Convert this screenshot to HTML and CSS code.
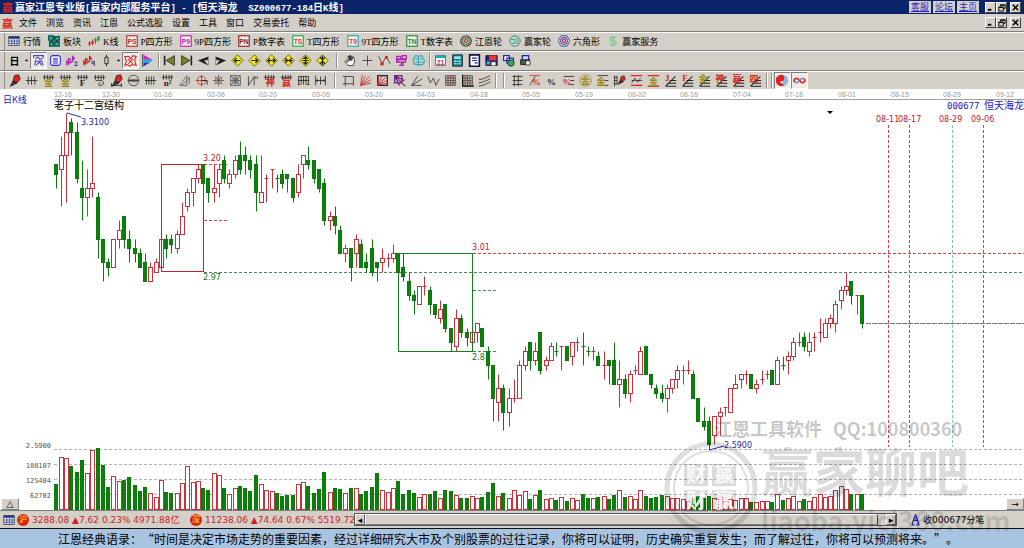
FILE: index.html
```html
<!DOCTYPE html>
<html lang="zh-CN">
<head>
  <meta charset="UTF-8">
  <meta name="viewport" content="width=device-width, initial-scale=1.0">
  <title>赢家江恩专业版</title>
  <link rel="stylesheet" href="styles.css">
</head>
<body>
<svg class="defs" aria-hidden="true">
  <symbol id="min" viewBox="0 0 10 10"><path d="M2 7.5h4" stroke="#000" stroke-width="2"/></symbol>
  <symbol id="restore" viewBox="0 0 10 10"><path d="M4 4V2h5v4H7M4 2.5h5M2 4.5h5V9H2zM2 5h5" fill="none" stroke="#000"/></symbol>
  <symbol id="close" viewBox="0 0 10 10"><path d="M2 2l6 6M8 2L2 8" stroke="#000" stroke-width="1.6"/></symbol>
  <symbol id="diamond" viewBox="0 0 16 16"><path d="M8 1l7 7-7 7-7-7z" fill="#f2ea1c" stroke="#5a5500"/></symbol>
  <symbol id="comb" viewBox="0 0 16 16"><path d="M1 4h14M3 1v6M6.500 1v6M10 1v6M13 1v6" stroke="#222" fill="none"/></symbol>
  <symbol id="fan" viewBox="0 0 16 16"><path d="M2 15L14 3M2 15h13M4 11.500h11M7 8h8" stroke="#222" fill="none" stroke-width="1.300"/></symbol>
  <symbol id="pen" viewBox="0 0 16 16"><path d="M8 2l5-1 2 5-4 5-5-2z" fill="#d22" stroke="#222"/><path d="M6 9l5 2-8 4z" fill="#444" stroke="#111"/></symbol>
  <symbol id="grid" viewBox="0 0 16 16"><path d="M2 2h12v12H2zM2 5h12M2 8h12M2 11h12M5 2v12M8 2v12M11 2v12" fill="none" stroke="#444"/></symbol>
  <symbol id="rays" viewBox="0 0 16 16"><path d="M2 14L4 1M2 14L8 2M2 14L13 3M2 14L15 7M2 14L15 11" fill="none"/></symbol>
  <symbol id="table" viewBox="0 0 16 16"><path d="M1 2h14v12H1z" fill="#fff" stroke="#234"/><path d="M1 2h14v3H1z" fill="#238"/><path d="M1 8h14M1 11h14M5 5v9M8.500 5v9M12 5v9" stroke="#238"/></symbol>
</svg>

<div class="app">
  <header class="title-bar">
    <span class="logo">赢</span>
    <h1>赢家江恩专业版<span class="mono">[</span>赢家内部服务平台<span class="mono">] - [</span>恒天海龙<span class="mono">&nbsp; SZ000677-184</span>日<span class="mono">K</span>线<span class="mono">]</span></h1>
    <nav class="quick-links">
      <a href="#">客服</a>
      <a href="#">论坛</a>
      <a href="#">主页</a>
    </nav>
    <div class="win-buttons">
      <button aria-label="最小化"><svg><use href="#min"/></svg></button>
      <button aria-label="还原"><svg><use href="#restore"/></svg></button>
      <button class="x" aria-label="关闭"><svg><use href="#close"/></svg></button>
    </div>
  </header>

  <div class="menu-bar">
    <span class="logo">赢</span>
    <nav class="menu">
      <a href="#">文件</a><a href="#">浏览</a><a href="#">资讯</a><a href="#">江恩</a><a href="#">公式选股</a><a href="#">设置</a><a href="#">工具</a><a href="#">窗口</a><a href="#">交易委托</a><a href="#">帮助</a>
    </nav>
    <div class="win-buttons">
      <button aria-label="最小化窗口"><svg><use href="#min"/></svg></button>
      <button aria-label="还原窗口"><svg><use href="#restore"/></svg></button>
      <button class="x" aria-label="关闭窗口"><svg><use href="#close"/></svg></button>
    </div>
  </div>

  <div class="toolbar views">
    <button><svg><use href="#table"/></svg>行情</button>
    <button><svg viewBox="0 0 16 16"><path d="M1 1h6v6H1zM9 2h6v5H9zM2 9h5v6H2zM9 9h6v6H9z" fill="#2aa" stroke="#043" stroke-width="1.500"/><path d="M7 4h3M12 7v3M5 7v3" stroke="#000"/></svg>板块</button>
    <button><svg viewBox="0 0 16 16"><path d="M2 8v7M6 6v8M10 4v8M14 1v8" stroke="#c22"/><path d="M2 10v3M6 8v4" stroke="#d22" stroke-width="3"/><path d="M10 5v4M14 2v5" stroke="#194" stroke-width="3"/></svg>K线</button>
    <button><svg class="tag tag-p" viewBox="0 0 16 16"><rect x="1" y="1" width="14" height="14"/><text x="8" y="12">PS</text></svg>P四方形</button>
    <button><svg class="tag tag-m" viewBox="0 0 16 16"><rect x="1" y="1" width="14" height="14"/><text x="8" y="12">P9</text></svg>9P四方形</button>
    <button><svg class="tag tag-r" viewBox="0 0 16 16"><rect x="1" y="1" width="14" height="14"/><text x="8" y="12">PN</text></svg>P数字表</button>
    <button><svg class="tag tag-g" viewBox="0 0 16 16"><rect x="1" y="1" width="14" height="14"/><text x="8" y="12">TS</text></svg>T四方形</button>
    <button><svg class="tag tag-c" viewBox="0 0 16 16"><rect x="1" y="1" width="14" height="14"/><text x="8" y="12">T9</text></svg>9T四方形</button>
    <button><svg class="tag tag-n" viewBox="0 0 16 16"><rect x="1" y="1" width="14" height="14"/><text x="8" y="12">TN</text></svg>T数字表</button>
    <button><svg viewBox="0 0 16 16" fill="none"><circle cx="8" cy="8" r="7" stroke="#522" stroke-width="1.500"/><circle cx="8" cy="8" r="4.500" stroke="#284" stroke-width="1.500"/><circle cx="8" cy="8" r="2" stroke="#c22" stroke-width="1.500"/></svg>江恩轮</button>
    <button><svg viewBox="0 0 16 16" fill="none"><circle cx="8" cy="8" r="7" stroke="#388" stroke-width="1.200"/><path d="M3 6h5v5H4M9 4l3 2v5H9" stroke="#2a7" stroke-width="1.300"/></svg>赢家轮</button>
    <button><svg viewBox="0 0 16 16" fill="none"><path d="M4 1h8l4 7-4 7H4L0 8z" stroke="#338" /><circle cx="8" cy="8" r="4.500" stroke="#55c" stroke-width="1.500"/><circle cx="8" cy="8" r="2" stroke="#c22" stroke-width="1.500"/></svg>六角形</button>
    <button><svg viewBox="0 0 16 16"><path d="M12 4Q8 1 5 4t3 4 3 4-7 0M8 1v14" fill="none" stroke="#8c9" stroke-width="2.500"/></svg>赢家服务</button>
  </div>

  <div class="toolbar icons">
    <button aria-label="日线" class="txt">日</button>
    <button aria-label="周期" class="narrow"><svg viewBox="0 0 16 16"><path d="M4 6h8l-4 5z"/></svg></button>
    <button aria-label="图形" class="on"><svg viewBox="0 0 16 16" fill="none" stroke="#44c" stroke-width="1.300"><path d="M2 5V2h12v3M4 6l3-2 3 3 3-2M3 9h10M5 8l-2 6M11 8l3 6M5 14l4-4 3 4"/></svg></button>
    <button aria-label="资料"><svg viewBox="0 0 16 16" fill="#eef" stroke="#33c" stroke-width="1.300"><path d="M4 2h8l2 2v8l-2 2H4l-2-2V4z"/><path d="M5 6h6M5 8.500h6M5 11h6"/></svg></button>
    <button aria-label="波段三"><svg viewBox="0 0 16 16" fill="none"><path d="M1 14V9l2 3V6h2v5l3-2V2l2 5V4" stroke="#a2a" stroke-width="1.500"/><path d="M10 10h4l-2 2 2 2h-4" stroke="#226"/></svg></button>
    <button aria-label="波段九"><svg viewBox="0 0 16 16" fill="none"><path d="M1 14V9l2 3V6h2v5l3-2V2l2 5V4" stroke="#c22" stroke-width="1.500"/><path d="M14 12h-3v-3h3v6" stroke="#226"/></svg></button>
    <button aria-label="蜡烛"><svg viewBox="0 0 16 16"><path d="M8 1v14" stroke="#111"/><path d="M6 4h4v8H6z" fill="#d4d0c8" stroke="#111"/></svg></button>
    <button aria-label="样式" class="narrow"><svg viewBox="0 0 16 16"><path d="M4 6h8l-4 5z"/></svg></button>
    <button aria-label="星形" class="on"><svg viewBox="0 0 16 16" fill="none" stroke="#d22" stroke-width="1.300"><path d="M1 3h5l2 3 3-4 4 1-2 5 2 6-5-1-3 2-3-2-3 1 2-5zM5 6l6 6M11 6l-6 6"/></svg></button>
    <button aria-label="筹码"><svg viewBox="0 0 16 16"><path d="M2 0v16" stroke="#333"/><path d="M3 1l11 6H3z" fill="#c2c"/><path d="M3 7h12l-5 4H3z" fill="#2ac"/><path d="M3 11h7l-7 4z" fill="#22c"/></svg></button>
    <i class="sep"></i>
    <button aria-label="首个"><svg viewBox="0 0 16 16"><path d="M2 2v12" stroke="#222" stroke-width="2"/><path d="M14 2v12L4 8z" fill="#7a8520" stroke="#222"/></svg></button>
    <button aria-label="末个"><svg viewBox="0 0 16 16"><path d="M14 2v12" stroke="#222" stroke-width="2"/><path d="M2 2v12l10-6z" fill="#7a8520" stroke="#222"/></svg></button>
    <button aria-label="前一"><svg viewBox="0 0 16 16"><path d="M1 8l13-5v4L9 8l5 6z" fill="#222"/><path d="M14 3v11" stroke="#888"/></svg></button>
    <button aria-label="后一"><svg viewBox="0 0 16 16"><path d="M15 8L2 3v4l5 1-5 6z" fill="#222"/><path d="M2 3v11" stroke="#888"/></svg></button>
    <button aria-label="左移"><svg viewBox="0 0 16 16"><use href="#diamond"/><path d="M4 8h8M7 5L4 8l3 3" fill="none" stroke="#222" stroke-width="1.500"/></svg></button>
    <button aria-label="右移"><svg viewBox="0 0 16 16"><use href="#diamond"/><path d="M4 8h8M9 5l3 3-3 3" fill="none" stroke="#222" stroke-width="1.500"/></svg></button>
    <button aria-label="横向拉伸"><svg viewBox="0 0 16 16"><use href="#diamond"/><path d="M3 8h10M6 5.500L3.500 8 6 10.500M10 5.500L12.500 8 10 10.500" fill="none" stroke="#222" stroke-width="1.500"/></svg></button>
    <button aria-label="横向压缩"><svg viewBox="0 0 16 16"><use href="#diamond"/><path d="M3 8h10M4 5l3 3-3 3M12 5L9 8l3 3" fill="none" stroke="#222" stroke-width="1.500"/></svg></button>
    <button aria-label="纵向拉伸"><svg viewBox="0 0 16 16"><use href="#diamond"/><path d="M8 3v10M5.500 6L8 3.500 10.500 6M5.500 10L8 12.500 10.500 10M4 8h8" fill="none" stroke="#222" stroke-width="1.500"/></svg></button>
    <button aria-label="纵向压缩"><svg viewBox="0 0 16 16"><use href="#diamond"/><path d="M8 2v12M5 4l3 3 3-3M5 12l3-3 3 3" fill="none" stroke="#222" stroke-width="1.500"/></svg></button>
    <i class="sep wide"></i>
    <button aria-label="拖动"><svg viewBox="0 0 16 16" fill="#fff" stroke="#222"><path d="M5 14L1 9l1-1 3 2V3h1.500v5V2H8v6V2.500h1.500V8l1-4.500H12l1 6-2 5z"/></svg></button>
    <button aria-label="十字"><svg viewBox="0 0 16 16"><path d="M8 2v12M2 8h12" stroke="#333"/></svg></button>
    <button aria-label="波形"><svg viewBox="0 0 16 16" fill="none"><path d="M1 3l4 9 5-9 5 9" stroke="#333"/><path d="M3 10h4v4H3zM9 2h3v4H9z" fill="#d22"/></svg></button>
    <button aria-label="紫色标记"><svg viewBox="0 0 16 16" fill="none" stroke="#a2a" stroke-width="1.500"><path d="M2 3h5v3H2zM9 2h5v4H9zM4 7h9v3H4zM8 10v4M5 14h5V9M2 6v4h3"/></svg></button>
    <button aria-label="云图"><svg viewBox="0 0 16 16" fill="none" stroke="#3ab" stroke-width="1.500"><path d="M8 3q-5-3-5 2-3 2-1 4-1 4 4 4l2 1V3q5-3 5 2 3 2 2 5-1 4-4 3l-3 1M4 6h3M4 10h3M10 6h2M10 10h3"/></svg></button>
    <i class="sep"></i>
    <button aria-label="日历"><svg viewBox="0 0 16 16"><path d="M2 2h12v12H2z" fill="#fff" stroke="#357"/><path d="M2 2h12v3H2z" fill="#2aa"/><text class="cal" x="8" y="13">21</text></svg></button>
    <button aria-label="计算器"><svg viewBox="0 0 16 16"><path d="M2 1h12v14H2z" fill="#189" stroke="#112"/><path d="M4 3h8v3H4z" fill="#9ee"/><path d="M4 9h8M4 12h8" stroke="#fff" stroke-width="1.500" stroke-dasharray="2 1"/></svg></button>
    <button aria-label="记事"><svg viewBox="0 0 16 16"><path d="M2 1h12v14H2z" fill="#fff" stroke="#114" stroke-width="2"/><path d="M5 5h6M5 8h6M8 11h4" stroke="#22a" stroke-width="1.500"/></svg></button>
    <button aria-label="保存"><svg viewBox="0 0 16 16"><path d="M1 2h14v12H1z" fill="#228" stroke="#111"/><path d="M5 2h9v6H5z" fill="#e33"/><path d="M2 9h4v4H2z" fill="#3bb"/><path d="M8 10h5v4H8z" fill="#fff"/></svg></button>
    <button aria-label="同步"><svg viewBox="0 0 16 16"><path d="M2 2h7v6H2zM6 5h8v6H6z" fill="#fff" stroke="#22a" stroke-width="1.500"/><circle cx="11" cy="11" r="4" fill="#3a6" stroke="#222"/></svg></button>
    <button aria-label="打印"><svg viewBox="0 0 16 16"><path d="M4 2h8v6H4z" fill="#cdf" stroke="#22a" stroke-width="1.500"/><path d="M2 7h11v6H2z" fill="#555" stroke="#111"/><circle cx="11" cy="11" r="3" fill="#eee" stroke="#222"/></svg></button>
  </div>

  <div class="toolbar icons draw">
    <button aria-label="画笔"><svg viewBox="0 0 16 16"><use href="#pen"/></svg></button>
    <button aria-label="周期线"><svg viewBox="0 0 16 16"><path d="M1 8h14M4 3v10M8 3v10M12 3v10" stroke="#222"/></svg></button>
    <button aria-label="金周期"><svg viewBox="0 0 16 16" class="gold"><use href="#comb"/><text x="8" y="15">金</text></svg></button>
    <button aria-label="金时间"><svg viewBox="0 0 16 16" class="gold"><use href="#comb"/><text x="8" y="15">金</text></svg></button>
    <button aria-label="斐波那契"><svg viewBox="0 0 16 16" class="dark"><use href="#comb"/><text x="8" y="15">F</text></svg></button>
    <button aria-label="螺旋"><svg viewBox="0 0 16 16" fill="none"><use href="#comb"/><path d="M3 8h8q4 3 0 6-5 1-4-2 2-3 3 0" stroke="#333"/></svg></button>
    <button aria-label="标注笔"><svg viewBox="0 0 16 16"><use href="#pen"/><path d="M1 14h14M2 11v5M14 11v5" stroke="#222"/></svg></button>
    <button aria-label="圆周"><svg viewBox="0 0 16 16" fill="none" stroke="#333"><circle cx="8" cy="8" r="6.500"/><path d="M1 8h14M4 6v4M6 6v4M8 6v4M10 6v4M12 6v4"/></svg></button>
    <button aria-label="等距线"><svg viewBox="0 0 16 16"><path d="M1 8h14M3 3v10M6 3v10M9 3v10M12 3v10" stroke="#222"/></svg></button>
    <button aria-label="平方线"><svg viewBox="0 0 16 16" class="dark"><use href="#comb"/><text x="8" y="15">n²</text></svg></button>
    <button aria-label="三角"><svg viewBox="0 0 16 16" fill="none" stroke="#555"><path d="M2 14L11 2v12zM5 14L14 4v8"/></svg></button>
    <button aria-label="角度圆"><svg viewBox="0 0 16 16" fill="none" stroke="#c22"><circle cx="8" cy="8" r="5"/><path d="M8 1v14M1 8h14"/><path d="M8 8h7v5" stroke="#222"/></svg></button>
    <button aria-label="星角"><svg viewBox="0 0 16 16" fill="none" stroke="#555"><circle cx="8" cy="8" r="4" stroke="#c44"/><path d="M8 1v14M1 8h14M3 3l10 10M13 3L3 13"/></svg></button>
    <button aria-label="方阵"><svg viewBox="0 0 16 16" fill="none" stroke="#555"><path d="M2 2h12v12H2zM5 5h6v6H5zM2 2l12 12M14 2L2 14M8 2v12M2 8h12"/></svg></button>
    <button aria-label="折线"><svg viewBox="0 0 16 16" fill="none" stroke="#333"><path d="M3 3v11L10 3v11M12 3v3M14 3v3"/></svg></button>
    <button aria-label="神周期"><svg viewBox="0 0 16 16" class="red"><use href="#comb"/><text x="9" y="15">神</text></svg></button>
    <button aria-label="赢周期"><svg viewBox="0 0 16 16" class="red"><use href="#comb"/><text x="8" y="15">赢</text></svg></button>
    <button aria-label="框架"><svg viewBox="0 0 16 16" fill="none" stroke="#222"><path d="M2 13V3h12v10M1 8h14M5 3v10M8 3v10M11 3v10M1 13h3M12 13h3"/></svg></button>
    <button aria-label="测距"><svg viewBox="0 0 16 16" fill="none" stroke="#222"><path d="M2 2v12M8 3v10M14 2v12M2 8h12M4 6v4M12 6v4"/></svg></button>
    <i class="sep wide"></i>
    <button aria-label="方框"><svg viewBox="0 0 16 16" fill="none" stroke="#333"><path d="M4 3h10v9H4zM1 3h3M4 12v3M1 12h3M14 12v2"/></svg></button>
    <button aria-label="射线"><svg viewBox="0 0 16 16" stroke="#c22"><use href="#rays"/></svg></button>
    <button aria-label="射线框"><svg viewBox="0 0 16 16" stroke="#c22"><path d="M2 2h12v12H2z" fill="none" stroke="#224" stroke-width="1.500"/><use href="#rays"/></svg></button>
    <button aria-label="反射线"><svg viewBox="0 0 16 16" stroke="#628"><path d="M2 2h9v9H2zM2 2l13 13M2 2l12 6M2 2l6 12" fill="none" stroke-width="1.500"/><path d="M4 4l10 10" stroke="#d22"/></svg></button>
    <button aria-label="角度线"><svg viewBox="0 0 16 16" fill="none" stroke="#333"><path d="M2 14L10 2M2 14L15 6M2 14h12"/></svg></button>
    <button aria-label="波浪"><svg viewBox="0 0 16 16" fill="none" stroke="#333"><path d="M1 3l3 8 4-6 3 9 4-8"/></svg></button>
    <button aria-label="网格"><svg viewBox="0 0 16 16"><use href="#grid"/><path d="M4 4h8v8H4z" fill="none" stroke="#c44"/></svg></button>
    <button aria-label="网格二"><svg viewBox="0 0 16 16"><use href="#grid"/><path d="M2 1v14h14" fill="none" stroke="#111" stroke-width="1.500"/><path d="M4 4l8 8" stroke="#c44"/></svg></button>
    <button aria-label="通道"><svg viewBox="0 0 16 16" fill="none" stroke="#333"><path d="M1 7l5-1 9-4M1 11l5-1 9-4M1 15l5-1 9-4"/></svg></button>
    <i class="sep"></i><i class="sep wide"></i>
    <button aria-label="价位线"><svg viewBox="0 0 16 16" fill="none" stroke="#222"><path d="M2 3h12M2 8h12M2 13h12M4 1v14M9 1v14"/></svg></button>
    <button aria-label="百分比线"><svg viewBox="0 0 16 16" class="red"><path d="M2 2h13" stroke="#d22"/><path d="M2 14L9 3" stroke="#333"/><text x="10" y="14">%</text></svg></button>
    <button aria-label="百分比"><svg viewBox="0 0 16 16" class="dark"><text x="8" y="13">%</text></svg></button>
    <button aria-label="分割百分比"><svg viewBox="0 0 16 16" class="red"><path d="M2 3h13M10 8h5M10 13h5" stroke="#222"/><text x="6" y="14">%</text></svg></button>
    <button aria-label="黄金圆"><svg viewBox="0 0 16 16" class="gold"><circle cx="8" cy="8" r="7" fill="none" stroke="#998a20"/><text x="8" y="12">金</text></svg></button>
    <button aria-label="黄金分割"><svg viewBox="0 0 16 16" class="gold"><path d="M2 2h13M10 8h5M2 14h13" stroke="#222"/><text x="6" y="13">金</text></svg></button>
    <button aria-label="标尺"><svg viewBox="0 0 16 16"><path d="M2 2v13M1 4h4M1 8h4M1 12h4M5 2v11" stroke="#222"/><g transform="translate(4 1)"><use href="#pen" width="12" height="13"/></g></svg></button>
    <button aria-label="波动区"><svg viewBox="0 0 16 16" fill="none"><path d="M1 2h14M1 14h14" stroke="#d22" stroke-width="1.500"/><path d="M2 11l4-6 4 5 3-5M2 8h13" stroke="#333"/></svg></button>
    <button aria-label="黄金区"><svg viewBox="0 0 16 16" class="gold"><path d="M1 2h14M1 15h14" stroke="#d22" stroke-width="1.500"/><text x="8" y="13">金</text></svg></button>
    <button aria-label="江恩扇"><svg viewBox="0 0 16 16" class="red"><use href="#fan"/><text x="4" y="9">J</text></svg></button>
    <button aria-label="F扇"><svg viewBox="0 0 16 16" class="red"><use href="#fan"/><text x="5" y="9">F</text></svg></button>
    <button aria-label="金扇"><svg viewBox="0 0 16 16" class="gold"><use href="#fan"/><text x="6" y="10">金</text></svg></button>
    <button aria-label="神扇"><svg viewBox="0 0 16 16" class="red"><use href="#fan"/><text x="6" y="10">神</text></svg></button>
    <button aria-label="赢扇"><svg viewBox="0 0 16 16" class="red"><use href="#fan"/><text x="6" y="10">赢</text></svg></button>
    <button aria-label="四扇"><svg viewBox="0 0 16 16" class="red"><use href="#fan"/><text x="6" y="10">四</text></svg></button>
    <i class="sep"></i><i class="sep"></i>
    <button aria-label="太极" class="on"><svg viewBox="0 0 16 16"><circle cx="8" cy="8" r="7" fill="#8bd"/><path d="M8 1a7 7 0 1 0 2 13q-4-2-1-6t-1-7z" fill="#d22"/><circle cx="7" cy="10" r="1.500" fill="#fff"/></svg></button>
    <button aria-label="无限" class="on"><svg viewBox="0 0 16 16" fill="none" stroke-width="2"><path d="M8 8Q5 4 2.500 6t0 4" stroke="#d22"/><path d="M2.500 10Q5 12 8 8" stroke="#69c"/><path d="M8 8q3-4 5.500-2" stroke="#69c"/><path d="M8 8q3 4 5.500 2t0-4" stroke="#d22"/></svg></button>
  </div>

  <main class="chart">
    <svg id="kline" class="plot" viewBox="0 0 1024 421" role="img" aria-label="恒天海龙 日K线">
      <g id="axis" class="axis"><path d="M54 10.500H1024"/></g>
      <g class="guides">
        <path class="grey" d="M54 360.500H1024M54 375.500H1024M54 390.500H1024M54 405.500H1024"/>
        <path class="red" d="M204 75.500h25M204 131.500h25M473 164.500H1024"/>
        <path class="green" d="M204 183.500H1024M473 201.500h25M473 262.500h25"/>
        <path class="last" d="M866 234.500H1024"/>
        <path class="red" d="M888.500 36V358M909.500 36V358M983.500 36V358"/>
        <path class="cyan" d="M952.500 36V358"/>
      </g>
      <g class="price">
        <text class="c-red" x="203" y="72">3.20</text>
        <text class="c-green" x="203" y="191">2.97</text>
        <text class="c-red" x="472" y="161">3.01</text>
        <text class="c-green" x="472" y="271">2.8</text>
        <text class="c-red" x="876" y="33">08-11</text>
        <text class="c-red" x="898" y="33">08-17</text>
        <text class="c-red" x="939" y="33">08-29</text>
        <text class="c-red" x="971" y="33">09-06</text>
        <text class="c-blue" x="81" y="36">3.3100</text>
        <text class="c-blue" x="724" y="359">2.5900</text>
      </g>
      <g id="candles"></g>
      <g id="volume"></g>
      <rect class="box c-red" x="161.500" y="75.500" width="42" height="107"/>
      <rect class="box c-green" x="398.500" y="164.500" width="74" height="98"/>
      <path class="pointer" d="M67 24l14 4M709 361l15-4"/>
      <path d="M827 22h6l-3 3z"/>
      <g class="vol-label">
        <text x="51" y="359">2.5900</text>
        <text x="51" y="379">188107</text>
        <text x="51" y="394">125404</text>
        <text x="51" y="409">62702</text>
      </g>
      <text class="name" x="3" y="14">日K线</text>
      <text class="study" x="54" y="20">老子十二宫结构</text>
      <text class="code" x="947" y="20">000677</text>
      <text class="stock" x="984" y="20">恒天海龙</text>
    </svg>
    <button class="corner left" aria-label="展开">△</button>
    <button class="corner right" aria-label="向右">→</button>
  </main>

  <footer class="status-bar">
    <svg class="grid-icon"><use href="#table"/></svg>
    <span class="badge">沪</span>
    <span class="index sh">3288.08 ▲7.62 0.23% 4971.88亿</span>
    <span class="badge">深</span>
    <span class="index sz">11238.06 ▲74.64 0.67% 5519.72亿</span>
    <div class="scroll">
      <button aria-label="向左滚动">◂</button>
      <div class="thumb"></div>
      <button aria-label="向右滚动">▸</button>
    </div>
    <div class="feed">
      <svg viewBox="0 0 10 14"><path d="M5 1L1 13M5 1l4 12M3 8h4M1 13h3M6 13h3" fill="none" stroke="#22a" stroke-width="1.500"/><path d="M5 1v6" stroke="#c44"/></svg>
      <span>收000677分笔</span>
    </div>
  </footer>

  <p class="quote">江恩经典语录：“时间是决定市场走势的重要因素，经过详细研究大市及个别股票的过往记录，你将可以证明，历史确实重复发生；而了解过往，你将可以预测将来。”。</p>

  <svg class="watermark" viewBox="0 0 374 140" aria-hidden="true">
    <text class="wm-small" x="64" y="28">江恩工具软件</text>
    <text class="wm-small" x="183" y="28">QQ:100800360</text>
    <circle cx="61" cy="80" r="44"/>
    <circle class="thin" cx="61" cy="80" r="37"/>
    <path d="M34 56h24v22H34zM62 56h24v22H62zM34 82h24v22H34zM62 82h24v22H62z"/>
    <text class="wm-seal" x="36" y="74">财</text>
    <text class="wm-seal" x="64" y="74">赢</text>
    <text class="wm-seal" x="36" y="100">财</text>
    <text class="wm-seal" x="64" y="100">赢</text>
    <text class="wm-big" x="111" y="84">赢家聊吧</text>
    <text class="wm-url" x="111" y="123">liaoba.yicj360.com</text>
  </svg>
</div>
<script src="chart.js"></script>
</body>
</html>
```
FILE: styles.css
```css
* {
  box-sizing: border-box;
}
body {
  margin: 0;
  background: #d4d0c8;
  font-family: "Liberation Serif", "Noto Sans CJK SC", sans-serif;
  font-size: 9px;
  color: #000;
}
button {
  font: inherit;
  color: inherit;
  padding: 0;
  border: none;
  background: none;
}
a {
  color: inherit;
  text-decoration: none;
}
.defs {
  position: absolute;
  width: 0;
  height: 0;
}
.app {
  position: relative;
  overflow: hidden;
}

/* title + menu */
.title-bar {
  display: flex;
  align-items: center;
  height: 14px;
  padding: 0 3px 0 2px;
  background: #0a246a;
  color: #fff;
}
.title-bar h1 {
  flex: 1;
  margin: 0;
  font: bold 10px/14px "Noto Sans CJK SC", sans-serif;
  white-space: nowrap;
}
.mono {
  font: bold 9px "Liberation Mono", monospace;
}
.logo {
  margin-right: 2px;
  color: #d22;
  font: bold 11px/14px "Noto Sans CJK SC", sans-serif;
}
.quick-links {
  display: flex;
  gap: 2px;
  margin-right: 6px;
}
.quick-links a {
  width: 22px;
  height: 12px;
  font: 9px/11px "Noto Sans CJK SC", sans-serif;
  text-align: center;
  text-decoration: underline;
  color: #22c;
  background: #d4d0c8;
}
.win-buttons {
  display: flex;
}
.win-buttons button {
  width: 11px;
  height: 11px;
  background: #d4d0c8;
  border: 1px solid;
  border-color: #fff #404040 #404040 #fff;
}
.win-buttons .x {
  margin-left: 3px;
}
.win-buttons svg {
  display: block;
  width: 9px;
  height: 9px;
}
.menu-bar {
  display: flex;
  align-items: center;
  height: 17px;
  padding: 0 3px 0 2px;
}
.menu-bar .logo {
  margin-right: 6px;
}
.menu {
  flex: 1;
  display: flex;
  gap: 9px;
}

/* toolbars */
.toolbar {
  display: flex;
  align-items: center;
  height: 19px;
  padding-left: 8px;
  border-top: 1px solid #808080;
  box-shadow: inset 0 1px #fff, inset 4px 0 #d4d0c8, inset 5px 0 #909090;
  white-space: nowrap;
  overflow: hidden;
}
.views {
  gap: 7px;
}
.views button {
  display: flex;
  align-items: center;
  gap: 3px;
}
.views svg {
  width: 12px;
  height: 12px;
}
.tag rect {
  fill: #f4f0e8;
  stroke: currentColor;
  stroke-width: 1.5;
}
.tag text {
  font: bold 9px "Liberation Sans", sans-serif;
  text-anchor: middle;
  fill: currentColor;
}
.tag-p { color: #a33; }
.tag-m { color: #b2b; }
.tag-r { color: #822; }
.tag-g { color: #2a4; }
.tag-c { color: #2aa; }
.tag-n { color: #283; }
.tag-c text,
.tag-g text { fill: #c44; }

.icons {
  height: 20px;
  padding-left: 6px;
}
.icons.draw {
  height: 19px;
}
.icons button {
  display: flex;
  align-items: center;
  justify-content: center;
  width: 17px;
  height: 17px;
  flex: none;
}
.icons svg {
  width: 13px;
  height: 13px;
  flex: none;
}
.icons .txt {
  font-weight: bold;
  font-size: 10px;
}
.icons .narrow {
  width: 7px;
}
.icons .narrow svg {
  width: 7px;
}
.icons .on {
  background: #eeeae4;
  border: 1px solid;
  border-color: #808080 #fff #fff #808080;
}
.sep {
  width: 1px;
  height: 15px;
  margin: 0 2px;
  background: #909090;
  box-shadow: 1px 0 #fff;
  flex: none;
}
.sep.wide {
  margin: 0 5px;
}
.icons text {
  font: bold 11px "Liberation Serif", "Noto Sans CJK SC", sans-serif;
  text-anchor: middle;
}
.icons .cal {
  font: bold 8px "Liberation Sans", sans-serif;
  fill: #d22;
}
.gold text { fill: #998a20; }
.red text { fill: #d22; }
.dark text { fill: #222; }

/* chart */
.chart {
  position: relative;
  background: #fff;
  border-bottom: 1px solid #808080;
}
.plot {
  display: block;
  width: 100%;
  height: auto;
}
.axis path {
  stroke: #a0a0a0;
}
.axis text {
  font: 7px "Liberation Sans", sans-serif;
  fill: #999;
}
.guides path {
  fill: none;
  stroke-width: 1;
  stroke-dasharray: 3 2;
}
.guides .grey { stroke: #b4b4b4; }
.guides .red { stroke: #d8404a; }
.guides .green { stroke: #4b8a58; }
.guides .cyan { stroke: #7cc0d8; }
.guides .last {
  stroke: #777;
  stroke-dasharray: 5 1;
}
.price text {
  font: 8px "DejaVu Sans", sans-serif;
}
.c-red { fill: #c2202c; }
.c-green { fill: #14751c; }
.c-blue { fill: #1c1ca0; }
.box {
  fill: none;
  stroke-width: 1;
}
.box.c-red { stroke: #c2202c; }
.box.c-green { stroke: #14801c; }
.pointer {
  fill: none;
  stroke: #2a2aa8;
}
.vol-label text {
  font: 7px "DejaVu Sans Mono", monospace;
  text-anchor: end;
  fill: #555;
}
.name {
  font: 9px "Noto Sans CJK SC", sans-serif;
  fill: #22b;
}
.study {
  font: 10px "Noto Sans CJK SC", sans-serif;
}
.code {
  font: 9px "DejaVu Sans Mono", monospace;
  fill: #22b;
}
.stock {
  font: 10px "Noto Sans CJK SC", sans-serif;
  fill: #22b;
}
.up {
  stroke: #c8323c;
  fill: #fff;
}
.down {
  stroke: #0a7a0a;
  fill: #0a820a;
}
.corner {
  position: absolute;
  bottom: 0;
  width: 18px;
  height: 12px;
  font: 9px/9px "DejaVu Sans", sans-serif;
  background: #d4d0c8;
  border: 1px solid;
  border-color: #fff #808080 #808080 #fff;
}
.corner.left { left: 1px; }
.corner.right { right: 0; }

/* bottom bars */
.status-bar {
  display: flex;
  align-items: center;
  height: 17px;
  padding: 0 3px;
  font: 9px "DejaVu Sans", "Noto Sans CJK SC", sans-serif;
  white-space: nowrap;
}
.grid-icon {
  width: 12px;
  height: 12px;
  margin-right: 2px;
}
.badge {
  width: 12px;
  height: 12px;
  border-radius: 50%;
  background: #dd2211;
  color: #ffe84a;
  font-size: 8px;
  line-height: 11px;
  text-align: center;
}
.index {
  margin-left: 3px;
  color: #d0202c;
  overflow: hidden;
}
.index.sh { width: 158px; }
.index.sz { width: 149px; }
.scroll {
  display: flex;
  flex: 1;
  height: 13px;
  border: 1px solid #555;
}
.scroll button {
  width: 10px;
  background: #d4d0c8;
  border: 1px solid;
  border-color: #fff #606060 #606060 #fff;
  line-height: 8px;
}
.scroll .thumb {
  flex: 1;
  margin-right: 8px;
  border: 1px solid;
  border-color: #fff #404040 #808080 #fff;
}
.feed {
  display: flex;
  align-items: center;
  width: 124px;
  padding-left: 14px;
  gap: 3px;
}
.feed svg {
  width: 9px;
  height: 13px;
}
.quote {
  margin: 0;
  height: 20px;
  padding-left: 58px;
  border-top: 1px solid #111;
  background: #a9c4e0;
  font: 12px/19px "Noto Sans CJK SC", sans-serif;
  text-spacing-trim: space-all;
  white-space: nowrap;
  overflow: hidden;
}

/* watermark lies over the chart and the bars */
.watermark {
  position: absolute;
  right: 0;
  bottom: 0;
  width: 374px;
  height: 140px;
  pointer-events: none;
  fill: #000;
  fill-opacity: 0.14;
}
.watermark text {
  font-family: "Noto Sans CJK SC", sans-serif;
  font-weight: bold;
}
.watermark circle {
  fill: none;
  stroke: #000;
  stroke-opacity: 0.13;
  stroke-width: 5;
}
.watermark .thin { stroke-width: 2; }
.watermark .wm-small {
  font-size: 18px;
  fill-opacity: 0.24;
}
.watermark .wm-seal {
  font-size: 20px;
  fill: #fff;
  fill-opacity: 0.9;
}
.watermark .wm-big { font-size: 52px; }
.watermark .wm-url { font-size: 27px; fill-opacity: 0.12; }
```
FILE: chart.js
```js
// [up, high, body top, body bottom, low, volume], prices in 0.01
const days = [
  [0,320,320,318,315,74],[1,326,322,319,311,156],[1,331,327,322,312,152],[0,330,329,327,322,129],[0,329,327,317,316,110],
  [0,321,315,313,308,146],[1,319,315,313,309,107],[1,326,316,315,313,176],[0,314,313,304,300,182],[0,304,304,299,295,132],
  [0,300,299,298,296,66],[1,304,304,298,298,98],[1,308,306,304,302,83],[0,309,309,304,302,87],[0,306,304,302,299,95],
  [0,304,302,301,299,73],[0,302,301,298,298,54],[0,301,299,295,295,66],[1,299,298,295,295,48],[1,300,299,297,297,35],
  [1,304,304,298,298,86],[0,305,304,302,300,50],[0,305,304,303,301,48],[1,306,305,302,301,48],[1,312,309,305,305,77],
  [1,315,314,311,310,129],[1,317,317,314,311,80],[1,320,319,317,316,84],[0,320,320,316,316,64],[0,317,317,314,312,56],
  [1,320,315,314,312,107],[1,320,319,316,313,102],[0,322,321,317,316,62],[1,319,318,316,315,46],[1,322,321,318,317,64],
  [0,325,322,319,318,69],[0,324,322,321,318,63],[0,322,321,319,317,54],[0,322,320,314,310,102],[1,322,314,312,312,74],
  [1,318,317,317,312,56],[1,319,319,319,315,53],[0,318,317,317,314,48],[0,319,318,316,315,40],[0,318,318,317,314,42],
  [0,317,317,313,312,42],[1,320,318,314,313,74],[1,322,322,320,317,80],[0,324,321,320,319,69],[0,321,321,317,316,48],
  [0,319,319,315,314,60],[0,317,316,308,307,110],[1,310,309,308,306,50],[0,311,309,307,305,62],[0,307,306,301,301,60],
  [1,303,302,301,299,48],[0,302,302,298,295,62],[1,305,304,301,298,62],[0,304,303,298,298,44],[0,301,299,298,297,53],
  [0,304,302,297,296,66],[0,299,299,298,295,108],[1,302,300,299,297,56],[1,301,300,300,298,50],[1,303,301,300,299,62],
  [0,301,301,297,297,84],[0,301,298,296,295,45],[0,297,295,292,291,56],[0,293,292,291,288,48],[1,294,294,290,290,36],
  [1,296,294,294,292,45],[0,294,293,290,288,45],[0,290,290,288,287,53],[1,291,289,287,286,34],[0,290,290,285,284,56],
  [0,285,285,282,280,53],[1,289,287,281,280,41],[0,288,287,284,283,33],[0,285,284,283,281,33],[1,285,284,282,280,38],
  [1,286,286,284,282,32],[0,285,285,281,281,36],[0,281,280,277,274,51],[0,277,277,270,265,78],[1,275,272,269,265,38],
  [0,273,272,267,263,48],[1,272,270,267,264,34],[1,274,270,270,269,56],[1,278,277,270,270,41],[1,281,280,277,276,53],
  [0,282,282,278,276,30],[1,282,280,278,277,41],[0,284,284,276,275,56],[1,279,278,277,276,29],[1,282,281,278,278,32],
  [0,282,280,280,279,28],[1,281,281,281,276,35],[0,281,281,278,278,24],[1,282,282,279,277,32],[1,283,282,282,280,28],
  [0,284,281,281,277,45],[0,281,280,280,279,34],[1,281,280,280,278,34],[0,280,279,277,277,35],[1,280,277,277,274,38],
  [0,278,278,277,273,30],[0,282,278,273,273,41],[1,278,274,273,268,56],[0,275,274,271,270,37],[1,276,275,271,269,38],
  [1,277,276,276,275,29],[1,281,280,275,275,56],[0,281,281,275,275,38],[0,275,275,273,272,34],[0,273,272,271,270,36],
  [0,273,271,270,269,42],[1,273,272,270,267,38],[1,274,274,272,271,34],[1,277,276,274,272,34],[1,277,276,276,273,30],
  [1,278,276,276,275,25],[0,276,275,270,270,32],[0,270,270,265,265,44],[0,268,265,264,263,34],[0,266,265,260,259,38],
  [1,266,266,262,260,33],[1,268,267,266,262,40],[1,268,268,268,266,25],[1,272,272,267,267,31],[1,275,273,272,272,28],
  [1,275,275,274,272,32],[1,276,275,275,273,32],[0,275,275,272,272,22],[1,274,273,272,271,21],[1,276,274,274,273,25],
  [1,276,275,275,274,25],[0,276,276,273,273,22],[1,279,278,273,273,45],[0,279,277,277,276,27],[1,280,279,278,275,33],
  [1,283,282,279,278,40],[1,284,282,282,281,24],[0,284,283,281,280,29],[1,284,282,280,279,25],[1,284,283,283,280,36],
  [1,287,284,284,282,45],[1,287,286,283,283,36],[1,288,287,286,285,40],[1,291,290,286,284,58],[1,294,293,291,289,70],
  [1,297,294,293,292,60],[0,295,295,292,290,46],[1,292,292,292,288,46],[0,292,292,286,285,45]
];

const dates = ["12-16", "12-30", "01-16", "02-06", "02-20", "03-06", "03-20", "04-03", "04-18", "05-05",
  "05-19", "06-02", "06-16", "07-04", "07-18", "08-01", "08-15", "08-29", "09-12"];

const STEP = 5.27;
const BASE = 420;
const NS = "http://www.w3.org/2000/svg";

function add(parent, tag, attrs) {
  const el = document.createElementNS(NS, tag);
  for (const key in attrs) el.setAttribute(key, attrs[key]);
  parent.appendChild(el);
  return el;
}

// pixel rows are snapped to .5 so the strokes stay sharp
const priceY = p => Math.round(24 + (331 - p) * 4.667) + 0.5;

const candles = document.getElementById("candles");
const volume = document.getElementById("volume");

days.forEach(([up, high, top, bottom, low, vol], i) => {
  const x = Math.floor(56 + i * STEP) + 0.5;
  const cls = up ? "up" : "down";
  const y1 = priceY(top);
  const y2 = priceY(bottom);
  add(candles, "path", { class: cls, d: `M${x} ${priceY(high)}V${priceY(low)}` });
  if (y1 === y2) {
    add(candles, "path", { class: cls, d: `M${x - 2} ${y1}h4` });
  } else {
    add(candles, "rect", { class: cls, x: x - 2, y: y1, width: up ? 4 : 3, height: y2 - y1 });
  }
  const h = Math.round(vol / 3);
  add(volume, "rect", { class: cls, x: x - 2, y: BASE + 0.5 - h, width: up ? 4 : 3, height: h });
});

const axis = document.getElementById("axis");
dates.forEach((date, i) => {
  add(axis, "text", { x: Math.round(49 + i * 52.6) + (i ? 0 : 5), y: 8 }).textContent = date;
});
```
